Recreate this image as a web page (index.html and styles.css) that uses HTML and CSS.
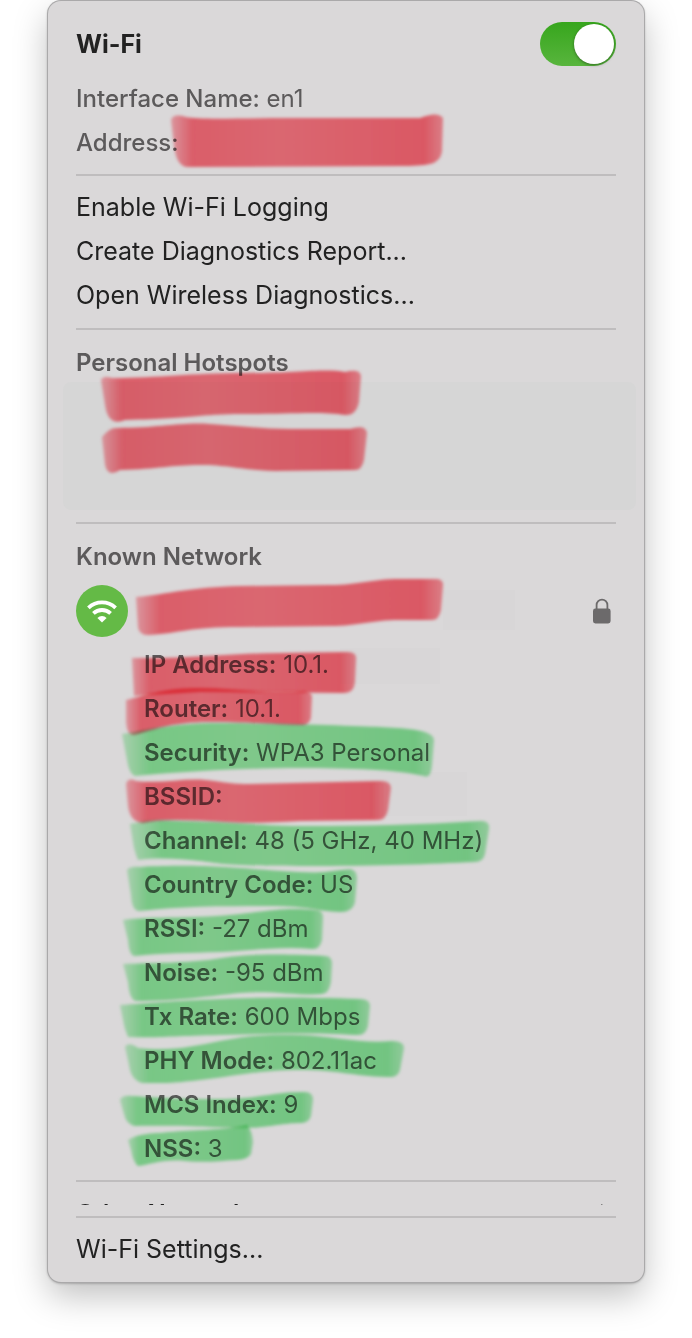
FILE: index.html
```html
<!DOCTYPE html>
<html lang="en">
<head>
    <meta charset="UTF-8">
    <meta name="viewport" content="width=device-width, initial-scale=1.0">
    <title>Wi-Fi</title>
    <link rel="stylesheet" href="styles.css">
</head>
<body>
    <main class="menu">
        <div class="menu-head">
            <label for="wifi-toggle">Wi-Fi</label>
            <input type="checkbox" id="wifi-toggle" class="toggle" role="switch" checked>
        </div>

        <ul class="info">
            <li><b>Interface Name:</b> en1</li>
            <li><b>Address:</b></li>
        </ul>

        <hr>

        <button class="item">Enable Wi-Fi Logging</button>
        <button class="item">Create Diagnostics Report...</button>
        <button class="item">Open Wireless Diagnostics...</button>

        <hr>

        <h2>Personal Hotspots</h2>
        <div class="hotspots"></div>

        <hr>

        <h2>Known Network</h2>
        <div class="network">
            <svg class="wifi-icon" viewBox="0 0 52 52" aria-hidden="true">
                <circle cx="26" cy="26" r="26" fill="#64ba46"/>
                <g fill="none" stroke="#fff" stroke-width="3.8">
                    <path d="M12.4 22.8a20 20 0 0 1 27.2 0"/>
                    <path d="M17.4 28.4a12.6 12.6 0 0 1 17.2 0"/>
                </g>
                <path d="M21.4 33a6.4 6.4 0 0 1 9.2 0L26 37.4z" fill="#fff"/>
            </svg>
            <svg class="lock-icon" viewBox="0 0 18 26" aria-hidden="true">
                <path d="M3.6 12V7a5.4 5.4 0 0 1 10.8 0v5" fill="none" stroke="#6c6a6b" stroke-width="1.8"/>
                <rect x="0" y="10.6" width="17.6" height="14.8" rx="2.4" fill="#6c6a6b"/>
            </svg>
        </div>
        <ul class="info details">
            <li><b>IP Address:</b> 10.1.</li>
            <li><b>Router:</b> 10.1.</li>
            <li><b>Security:</b> WPA3 Personal</li>
            <li><b>BSSID:</b></li>
            <li><b>Channel:</b> 48 (5 GHz, 40 MHz)</li>
            <li><b>Country Code:</b> US</li>
            <li><b>RSSI:</b> -27 dBm</li>
            <li><b>Noise:</b> -95 dBm</li>
            <li><b>Tx Rate:</b> 600 Mbps</li>
            <li><b>PHY Mode:</b> 802.11ac</li>
            <li><b>MCS Index:</b> 9</li>
            <li><b>NSS:</b> 3</li>
        </ul>

        <hr>

        <!-- scrolled out, only the top edge shows -->
        <button class="item other">
            Other Networks
            <svg class="chevron" viewBox="0 0 12 20" aria-hidden="true"><path d="M2 2l8 8-8 8" fill="none" stroke="#222" stroke-width="2.4"/></svg>
        </button>

        <hr>

        <button class="item">Wi-Fi Settings...</button>

        <!-- highlighter strokes -->
        <svg class="marker" width="596" height="1281" viewBox="48 1 596 1281" aria-hidden="true">
            <defs>
                <linearGradient id="red">
                    <stop offset="0" stop-color="#ff6675" stop-opacity=".5"/>
                    <stop offset=".08" stop-color="#ff6e7b"/>
                    <stop offset=".4" stop-color="#ff7984"/>
                    <stop offset=".93" stop-color="#ff6875"/>
                    <stop offset="1" stop-color="#ff6875" stop-opacity=".7"/>
                </linearGradient>
                <linearGradient id="green">
                    <stop offset="0" stop-color="#8ceb9c" stop-opacity=".5"/>
                    <stop offset=".09" stop-color="#8ceb9c"/>
                    <stop offset=".4" stop-color="#94eca2"/>
                    <stop offset=".94" stop-color="#86e898"/>
                    <stop offset="1" stop-color="#86e898" stop-opacity=".7"/>
                </linearGradient>
                <filter id="soft" x="-5%" y="-10%" width="110%" height="120%">
                    <feGaussianBlur stdDeviation="1.4"/>
                </filter>
            </defs>
            <g fill="#d6d6d6" class="patch">
                <rect x="443" y="590" width="72" height="40"/>
                <rect x="340" y="648" width="100" height="36"/>
                <rect x="370" y="772" width="97" height="44"/>
            </g>
            <g class="stroke" fill="url(#red)">
                <path d="M171 120Q173 113 186 117C200 120 240 118 300 118L420 118Q438 111 443 118L442 152Q440 162 430 164T400 166L187 167Q176 166 174 145z"/>
                <path d="M101 380Q103 375 112 378C160 378 190 373 245 373S325 368 345 372Q360 368 361 376L359 402Q356 416 345 415C320 411 290 414 245 414S200 418 125 420Q108 427 105 405z"/>
                <path d="M102 437Q110 427 117 428C160 428 180 422 210 424S265 429 290 429L350 429Q366 424 367 433L364 460Q362 470 355 470L275 471C240 470 230 465 200 465S160 469 120 470Q108 478 105 465z"/>
                <path d="M136 597C170 594 190 587 240 586L330 585C360 585 370 579 400 579L434 579Q444 578 443 586L441 610Q439 620 432 620L400 620C370 620 360 626 330 626L240 627C190 627 180 633 150 635Q140 636 138 628z"/>
                <path d="M132 658C190 659 230 653 280 653L348 652Q357 652 356 660L355 682Q354 693 345 693L200 692L134 696z"/>
                <path d="M126 700C150 694 165 688 200 688S270 694 304 691Q313 692 312 698L311 718Q309 725 303 725C260 724 250 722 210 722S150 731 134 735Q127 736 126 722z"/>
                <path d="M126 784Q128 777 136 781C160 784 185 778 205 780S230 784 250 784L378 781Q391 780 391 788L388 810Q386 820 378 820L300 821Q250 824 225 822T175 820Q155 820 143 823Q130 822 128 806z"/>
            </g>
            <g class="stroke" fill="url(#green)">
                <path d="M122 734C150 730 170 723 220 723S360 726 380 727S434 729 434 740L432 765Q431 779 424 776C400 770 350 768 300 768S190 771 135 776Q129 774 127 760z"/>
                <path d="M130 824C150 819 165 820 180 821C240 822 260 826 310 826S420 825 480 821Q490 820 489 829L485 854Q483 862 475 862C430 864 380 866 300 866S220 863 200 861S160 857 138 860Q134 850 133 842z"/>
                <path d="M127 870Q130 866 140 867C180 865 200 866 225 867S300 874 325 872T350 869Q357 870 357 878L355 902Q353 912 340 912C315 911 310 906 270 906S180 906 140 911Q132 912 131 895z"/>
                <path d="M123 920C150 916 200 919 240 914S290 908 315 910Q323 909 323 918L322 940Q320 949 313 949C280 946 250 951 220 952S160 953 135 956Q129 956 128 940z"/>
                <path d="M123 964C150 963 190 963 215 959S260 953 325 956Q332 956 332 964L331 982Q329 994 322 994C300 996 270 990 240 993S180 1001 135 1001Q129 998 128 982z"/>
                <path d="M120 1005C150 1003 170 1001 220 999S300 997 360 999Q370 999 370 1006L368 1026Q366 1035 358 1035C300 1032 270 1034 220 1035S160 1038 128 1037Q124 1028 123 1020z"/>
                <path d="M125 1047Q128 1041 138 1048C170 1052 195 1046 220 1041S265 1034 300 1035S360 1044 392 1041Q404 1041 404 1048L400 1070Q398 1078 388 1077C350 1076 340 1070 300 1070S235 1076 200 1080S165 1083 142 1083Q131 1080 129 1065z"/>
                <path d="M120 1100Q122 1095 132 1096C160 1098 180 1099 220 1099S270 1092 305 1092Q313 1092 313 1100L311 1116Q309 1123 301 1123C280 1123 270 1128 240 1128S200 1125 135 1126Q126 1124 124 1114z"/>
                <path d="M128 1140C140 1133 150 1134 170 1132S225 1130 247 1125Q252 1130 253 1142L251 1154Q248 1159 238 1160C215 1161 210 1163 185 1161S150 1165 138 1166Q133 1162 131 1150z"/>
            </g>
        </svg>
    </main>
</body>
</html>
```
FILE: styles.css
```css
* {
    box-sizing: border-box;
}

body {
    margin: 0;
    background-color: #fff;
    font-family: Inter, "Liberation Sans", sans-serif;
    font-size: 25px;
    line-height: 44px;
    color: #222;
}

.menu {
    position: relative;
    margin: 1px 48px 56px;
    padding: 21px 28px 11px;
    background-color: #dad8d9;
    border-radius: 13px;
    box-shadow: 0 0 0 1px #aaa9aa, 0 1px 3px rgba(0, 0, 0, 0.4), 0 14px 34px rgba(0, 0, 0, 0.25);
}

.menu-head {
    display: flex;
    justify-content: space-between;
    align-items: center;
    margin-bottom: 11px;
    font-weight: 700;
}

/* Switch */
.toggle {
    appearance: none;
    position: relative;
    width: 76px;
    height: 44px;
    margin: 0;
    border-radius: 22px;
    background: linear-gradient(#37a61d, #58b53d);
    cursor: pointer;
}

.toggle::before {
    content: "";
    position: absolute;
    top: 2px;
    left: 2px;
    width: 40px;
    height: 40px;
    border-radius: 50%;
    background-color: #fff;
    box-shadow: 0 1px 3px rgba(0, 0, 0, 0.4);
}

.toggle:checked::before {
    left: 34px;
}

hr {
    height: 2px;
    margin: 9px 0;
    border: none;
    background-color: #bfbdbe;
}

h2 {
    margin: 0;
    padding-top: 2px;
    font-size: 24px;
    font-weight: 600;
    line-height: 44px;
    color: #5c5a5b;
}

.info {
    margin: 0;
    padding: 0;
    list-style: none;
    font-size: 24px;
    color: #5c5a5b;
}

.info b {
    font-weight: 500;
}

.details {
    padding-left: 68px;
}

.details b {
    font-weight: 600;
}

.item {
    display: block;
    width: 100%;
    padding: 0;
    border: none;
    background: none;
    font: inherit;
    color: inherit;
    text-align: left;
    cursor: pointer;
}

.item + hr {
    margin-top: 11px;
}

.hotspots {
    height: 128px;
    margin: -3px -20px 12px -13px;
    border-radius: 8px;
    background-color: #d6d6d6;
}

/* Current network */
.network {
    display: flex;
    justify-content: space-between;
    align-items: center;
    height: 64px;
}

.wifi-icon {
    width: 52px;
    height: 52px;
}

.lock-icon {
    width: 18px;
    height: 26px;
    margin-right: 5px;
}

.other {
    display: flex;
    justify-content: space-between;
    height: 14px;
    overflow: hidden;
    font-size: 24px;
    font-weight: 600;
    line-height: 46px;
}

.chevron {
    width: 12px;
    height: 20px;
    margin: 12px 5px 0 0;
    flex-shrink: 0;
}

/* Highlighter */
.marker {
    position: absolute;
    top: 0;
    left: 0;
    mix-blend-mode: multiply;
    pointer-events: none;
}

.marker .patch {
    opacity: 0.05;
}

.stroke path {
    filter: url(#soft);
    mix-blend-mode: multiply;
}
```
